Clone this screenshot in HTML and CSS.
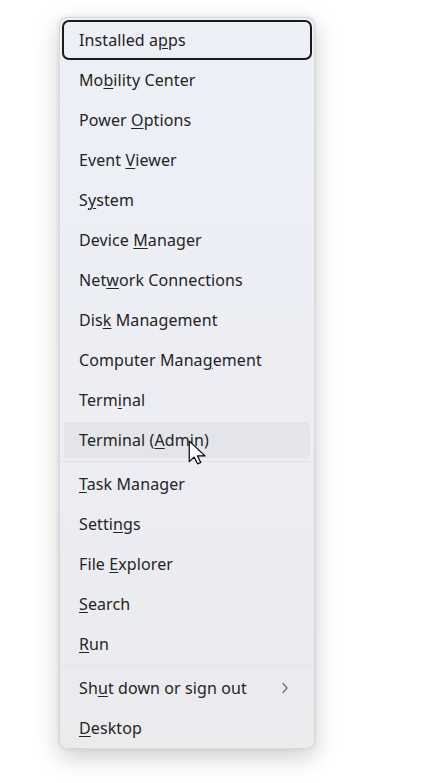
FILE: index.html
```html
<!DOCTYPE html>
<html>
<head>
<meta charset="utf-8">
<link rel="stylesheet" href="styles.css">
</head>
<body>
<div class="menu">
  <div class="item focus"><span>Installed a<u>p</u>ps</span></div>
  <div class="item"><span>Mo<u>b</u>ility Center</span></div>
  <div class="item"><span>Power <u>O</u>ptions</span></div>
  <div class="item"><span>Event <u>V</u>iewer</span></div>
  <div class="item"><span>S<u>y</u>stem</span></div>
  <div class="item"><span>Device <u>M</u>anager</span></div>
  <div class="item"><span>Net<u>w</u>ork Connections</span></div>
  <div class="item"><span>Dis<u>k</u> Management</span></div>
  <div class="item"><span>Computer Mana<u>g</u>ement</span></div>
  <div class="item"><span>Term<u>i</u>nal</span></div>
  <div class="item hover"><span>Terminal (<u>A</u>dmin)</span></div>
  <div class="sep"></div>
  <div class="item"><span><u>T</u>ask Manager</span></div>
  <div class="item"><span>Setti<u>n</u>gs</span></div>
  <div class="item"><span>File <u>E</u>xplorer</span></div>
  <div class="item"><span><u>S</u>earch</span></div>
  <div class="item"><span><u>R</u>un</span></div>
  <div class="sep"></div>
  <div class="item sub"><span>Sh<u>u</u>t down or sign out</span>
    <svg class="chev" width="8" height="12" viewBox="0 0 8 12"><path d="M2 1.5 L6 6 L2 10.5" fill="none" stroke="#6b6b6b" stroke-width="1.2" stroke-linecap="round" stroke-linejoin="round"/></svg>
  </div>
  <div class="item"><span><u>D</u>esktop</span></div>
</div>
<svg class="cursor" width="22" height="26" viewBox="0 0 20 24"><path d="M1 1 V20 L5.5 15.8 L8.7 22 L11.6 20.7 L8.6 14.7 H15.5 Z" fill="#fff" stroke="#000" stroke-width="1.1" stroke-linejoin="round"/></svg>
</body>
</html>
```
FILE: styles.css
```css
html, body {
  margin: 0;
  padding: 0;
  background: #ffffff;
}
body {
  position: relative;
  height: 783px;
  font-family: "Noto Sans", "Open Sans", sans-serif;
}
.menu {
  display: flex;
  flex-direction: column;
  margin: 17px 0 0 59px;
  width: 254px;
  border: 1px solid rgba(0, 0, 0, 0.09);
  border-radius: 8px;
  padding: 2px 0 0;
  background: linear-gradient(180deg, #eef0f7 0%, #eceef4 55%, #ebebee 100%);
  box-shadow: 0 8px 24px rgba(0, 0, 0, 0.2), 0 0 4px rgba(0, 0, 0, 0.07);
}
.item {
  display: flex;
  align-items: center;
  justify-content: space-between;
  height: 36px;
  margin: 2px 4px;
  padding: 0 21px 0 15px;
  border-radius: 4px;
  font-size: 16px;
  letter-spacing: 0.1px;
  color: #242424;
  white-space: nowrap;
}
.item u {
  text-decoration-thickness: 1px;
  text-underline-offset: 2px;
}
.item.focus {
  outline: 2px solid #1b1b1b;
  outline-offset: 0;
  border-radius: 5px;
}
.item.hover {
  background: #e3e5eb;
}
.sep {
  height: 1px;
  margin: 1px 0 2px;
  background: #e2e3e7;
}
.chev {
  display: block;
}
.cursor {
  position: absolute;
  left: 188px;
  top: 440px;
}
```
